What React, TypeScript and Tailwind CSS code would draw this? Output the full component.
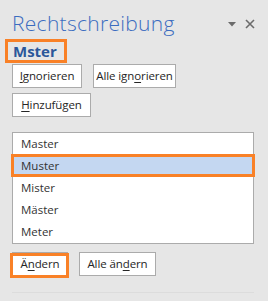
import React from "react";

const font = { fontFamily: '"Open Sans", "Noto Sans", Arial, sans-serif' };

function Btn({ children, className = "" }: { children: React.ReactNode; className?: string }) {
  return (
    <div
      className={`h-[24px] flex items-center justify-center border border-[#ababab] bg-white text-[11.5px] text-[#262626] ${className}`}
    >
      <span className="whitespace-nowrap tracking-[-0.1px]">{children}</span>
    </div>
  );
}

const U = ({ children }: { children: React.ReactNode }) => (
  <span className="underline underline-offset-2 decoration-1">{children}</span>
);

export default function App() {
  const items = ["Master", "Muster", "Mister", "Mäster", "Meter"];
  return (
    <div className="w-[268px] h-[301px] bg-[#e6e6e6] overflow-hidden" style={font}>
      <div className="flex items-start justify-between pl-[12px] pr-[13px] pt-[9px] h-[39px]">
        <div className="text-[21px] leading-[28px] font-light text-[#3b6cc0] tracking-[0.3px]">
          Rechtschreibung
        </div>
        <div className="flex items-center gap-[9px] mt-[10px]">
          <svg width="8" height="5" viewBox="0 0 8 5">
            <path d="M0 0 L8 0 L4 4.5 Z" fill="#6b6b6b" />
          </svg>
          <svg width="10" height="10" viewBox="0 0 10 10">
            <path d="M1 1 L9 9 M9 1 L1 9" stroke="#6b6b6b" strokeWidth="1.6" />
          </svg>
        </div>
      </div>
      <div className="pl-[5px] h-[24px]">
        <div className="w-[62px] h-[24px] border-[3px] border-[#f98127] pl-[5px] flex items-center text-[15px] font-bold text-[#2b579a] leading-none">
          Mster
        </div>
      </div>
      <div className="pl-[12px] mt-[1px] flex gap-[11px]">
        <Btn className="w-[70px]">
          <U>I</U>gnorieren
        </Btn>
        <Btn className="w-[83px]">
          Alle ign<U>o</U>rieren
        </Btn>
      </div>
      <div className="pl-[12px] mt-[5px] flex">
        <Btn className="w-[79px]">
          <U>H</U>inzufügen
        </Btn>
      </div>
      <div className="ml-[12px] mt-[15px] w-[242px] h-[112px] border border-[#ababab] bg-white relative">
        {items.map((it, i) => (
          <div
            key={it}
            className={`h-[22px] flex items-center pl-[8px] text-[11.5px] text-[#333333] ${
              i === 1 ? "bg-[#c4d7f1]" : ""
            }`}
          >
            {it}
          </div>
        ))}
        <div className="absolute left-[-2px] top-[21px] w-[244px] h-[23px] border-[3px] border-[#f98127]" />
      </div>
      <div className="pl-[12px] mt-[8px] flex gap-[11px] relative">
        <Btn className="w-[56px]">
          Ä<U>n</U>dern
        </Btn>
        <Btn className="w-[77px]">
          Alle än<U>d</U>ern
        </Btn>
        <div className="absolute left-[10px] top-[1px] w-[59px] h-[25px] border-[3px] border-[#f98127]" />
      </div>
      <div className="ml-[12px] mt-[16px] w-[242px] h-px bg-[#dcdcdc]" />
    </div>
  );
}
